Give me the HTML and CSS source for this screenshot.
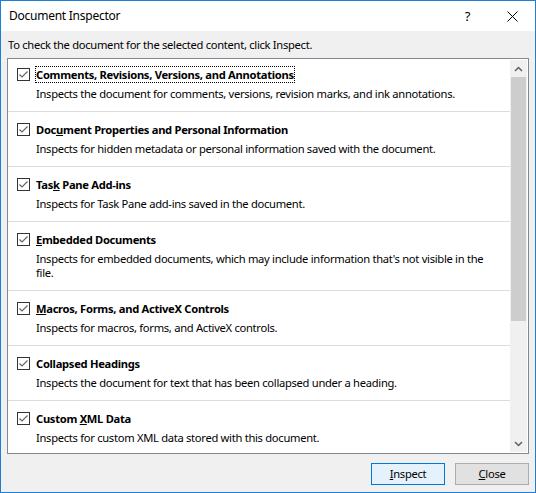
FILE: index.html
```
<!DOCTYPE html>
<html>
<head>
<meta charset="utf-8">
<link rel="stylesheet" href="styles.css">
</head>
<body>
<div class="window">
  <div class="titlebar">
    <span class="title">Document Inspector</span>
    <span class="cap-btn help">?</span>
    <span class="cap-btn close-x"><svg width="11" height="11" viewBox="0 0 11 11"><path d="M0.5 0.5 L10.5 10.5 M10.5 0.5 L0.5 10.5" stroke="#000" stroke-width="1" fill="none"/></svg></span>
  </div>
  <div class="body">
    <p class="intro">To check the document for the selected content, click Inspect.</p>
    <div class="listbox">
      <div class="items">
        <div class="item first">
          <svg class="cb" width="13" height="13" viewBox="0 0 13 13"><rect x="0.5" y="0.5" width="12" height="12" fill="#fff" stroke="#333"/><polyline points="2.5,6.5 5,9 10.5,3.5" fill="none" stroke="#666" stroke-width="1.2"/></svg>
          <div class="text"><div class="name"><span class="focus">Comments, Revisions, Versions, and Annotations</span></div><div class="desc">Inspects the document for comments, versions, revision marks, and ink annotations.</div></div>
        </div>
        <div class="item">
          <svg class="cb" width="13" height="13" viewBox="0 0 13 13"><rect x="0.5" y="0.5" width="12" height="12" fill="#fff" stroke="#333"/><polyline points="2.5,6.5 5,9 10.5,3.5" fill="none" stroke="#666" stroke-width="1.2"/></svg>
          <div class="text"><div class="name">Doc<u>u</u>ment Properties and Personal Information</div><div class="desc">Inspects for hidden metadata or personal information saved with the document.</div></div>
        </div>
        <div class="item">
          <svg class="cb" width="13" height="13" viewBox="0 0 13 13"><rect x="0.5" y="0.5" width="12" height="12" fill="#fff" stroke="#333"/><polyline points="2.5,6.5 5,9 10.5,3.5" fill="none" stroke="#666" stroke-width="1.2"/></svg>
          <div class="text"><div class="name">Tas<u>k</u> Pane Add-ins</div><div class="desc">Inspects for Task Pane add-ins saved in the document.</div></div>
        </div>
        <div class="item">
          <svg class="cb" width="13" height="13" viewBox="0 0 13 13"><rect x="0.5" y="0.5" width="12" height="12" fill="#fff" stroke="#333"/><polyline points="2.5,6.5 5,9 10.5,3.5" fill="none" stroke="#666" stroke-width="1.2"/></svg>
          <div class="text"><div class="name"><u>E</u>mbedded Documents</div><div class="desc">Inspects for embedded documents, which may include information that's not visible in the<br>file.</div></div>
        </div>
        <div class="item">
          <svg class="cb" width="13" height="13" viewBox="0 0 13 13"><rect x="0.5" y="0.5" width="12" height="12" fill="#fff" stroke="#333"/><polyline points="2.5,6.5 5,9 10.5,3.5" fill="none" stroke="#666" stroke-width="1.2"/></svg>
          <div class="text"><div class="name"><u>M</u>acros, Forms, and ActiveX Controls</div><div class="desc">Inspects for macros, forms, and ActiveX controls.</div></div>
        </div>
        <div class="item">
          <svg class="cb" width="13" height="13" viewBox="0 0 13 13"><rect x="0.5" y="0.5" width="12" height="12" fill="#fff" stroke="#333"/><polyline points="2.5,6.5 5,9 10.5,3.5" fill="none" stroke="#666" stroke-width="1.2"/></svg>
          <div class="text"><div class="name">Collapsed Headings</div><div class="desc">Inspects the document for text that has been collapsed under a heading.</div></div>
        </div>
        <div class="item">
          <svg class="cb" width="13" height="13" viewBox="0 0 13 13"><rect x="0.5" y="0.5" width="12" height="12" fill="#fff" stroke="#333"/><polyline points="2.5,6.5 5,9 10.5,3.5" fill="none" stroke="#666" stroke-width="1.2"/></svg>
          <div class="text"><div class="name">Custom <u>X</u>ML Data</div><div class="desc">Inspects for custom XML data stored with this document.</div></div>
        </div>
      </div>
      <div class="scrollbar">
        <div class="sb-btn"><svg width="9" height="6" viewBox="0 0 9 6"><polyline points="1,5 4.5,1.5 8,5" fill="none" stroke="#606060" stroke-width="1.5"/></svg></div>
        <div class="track"><div class="thumb"></div></div>
        <div class="sb-btn"><svg width="9" height="6" viewBox="0 0 9 6"><polyline points="1,1 4.5,4.5 8,1" fill="none" stroke="#606060" stroke-width="1.5"/></svg></div>
      </div>
    </div>
    <div class="buttons">
      <button class="btn primary"><u>I</u>nspect</button>
      <button class="btn"><u>C</u>lose</button>
    </div>
  </div>
</div>
</body>
</html>
```
FILE: styles.css
```
html, body {
  margin: 0;
  padding: 0;
}
body {
  font-family: "Segoe UI", "Noto Sans", sans-serif;
  font-size: 11.2px;
  letter-spacing: -0.3px;
  color: #000;
  background: #f0f0f0;
}
.window {
  width: 536px;
  height: 493px;
  box-sizing: border-box;
  border: 1px solid #1c7fd6;
  background: #f0f0f0;
  display: flex;
  flex-direction: column;
}
.titlebar {
  height: 30px;
  flex: none;
  background: #fff;
  display: flex;
  align-items: center;
  padding-left: 8px;
}
.title {
  line-height: 16px;
  flex: 1;
  font-size: 12px;
  letter-spacing: -0.25px;
}
.cap-btn {
  width: 45px;
  height: 30px;
  display: flex;
  align-items: center;
  justify-content: center;
}
.help {
  font-size: 13px;
}
.body {
  flex: 1;
  padding: 0 6px;
  display: flex;
  flex-direction: column;
}
.intro {
  margin: 6px 0 5px 1px;
  line-height: 16px;
}
.listbox {
  height: 396px;
  flex: none;
  box-sizing: border-box;
  border: 1px solid #828790;
  background: #fff;
  display: flex;
}
.items {
  flex: 1;
  overflow: hidden;
}
.item {
  display: flex;
  align-items: flex-start;
  padding: 10px 0 10px 9px;
  border-bottom: 1px solid #dcdcdc;
}
.item.first {
  padding-top: 8px;
}
.cb {
  flex: none;
  margin-top: 1px;
  margin-right: 6px;
  display: block;
}
.name {
  font-weight: bold;
  line-height: 16px;
  white-space: nowrap;
}
.focus {
  outline: 1px dotted #000;
}
.desc {
  margin-top: 4px;
  line-height: 14px;
  white-space: nowrap;
}
.scrollbar {
  width: 17px;
  flex: none;
  margin: 1px 1px 1px 0;
  background: #f0f0f0;
  display: flex;
  flex-direction: column;
}
.sb-btn {
  height: 17px;
  flex: none;
  display: flex;
  align-items: center;
  justify-content: center;
}
.track {
  flex: 1;
}
.thumb {
  height: 244px;
  margin: 0 1px;
  background: #cdcdcd;
}
.buttons {
  display: flex;
  justify-content: flex-end;
  gap: 10px;
  margin-top: 9px;
}
.btn {
  width: 74px;
  height: 22px;
  box-sizing: border-box;
  border: 1px solid #adadad;
  background: #e1e1e1;
  font: inherit;
  letter-spacing: inherit;
  color: #000;
  padding: 0;
  line-height: 18px;
}
.btn.primary {
  border-color: #0078d7;
  background: #e5f1fb;
}
```
